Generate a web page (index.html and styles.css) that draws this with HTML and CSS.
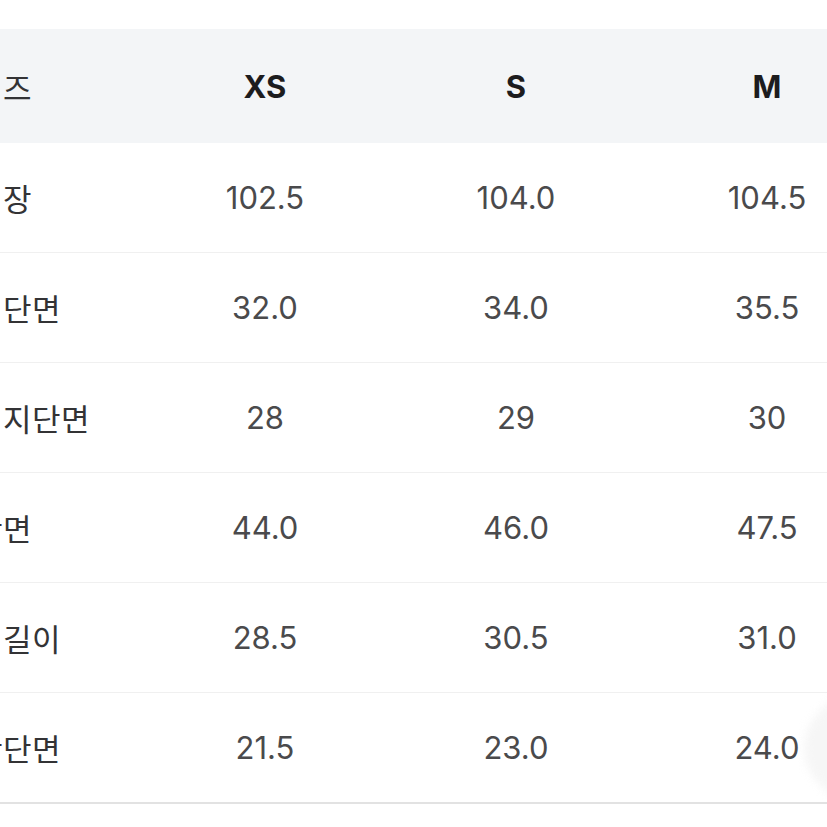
FILE: index.html
```html
<!DOCTYPE html>
<html lang="ko">
<head>
<meta charset="utf-8">
<title>사이즈표</title>
<link rel="stylesheet" href="styles.css">
</head>
<body>
<div class="page">
  <table class="size-table">
    <colgroup>
      <col class="col-label">
      <col class="col-size">
      <col class="col-size">
      <col class="col-size">
    </colgroup>
    <thead>
      <tr>
        <th class="label">사이즈</th>
        <th>XS</th>
        <th>S</th>
        <th>M</th>
      </tr>
    </thead>
    <tbody>
      <tr><td class="label">총기장</td><td>102.5</td><td>104.0</td><td>104.5</td></tr>
      <tr><td class="label">허리단면</td><td>32.0</td><td>34.0</td><td>35.5</td></tr>
      <tr><td class="label">허벅지단면</td><td>28</td><td>29</td><td>30</td></tr>
      <tr><td class="label">힙단면</td><td>44.0</td><td>46.0</td><td>47.5</td></tr>
      <tr><td class="label">밑위길이</td><td>28.5</td><td>30.5</td><td>31.0</td></tr>
      <tr class="last"><td class="label">밑단단면</td><td>21.5</td><td>23.0</td><td>24.0</td></tr>
    </tbody>
  </table>
  <div class="fab"></div>
</div>
</body>
</html>
```

FILE: styles.css
```css
html, body {
  margin: 0;
  padding: 0;
  overflow: hidden;
  background: #ffffff;
}

.page {
  position: relative;
  width: 827px;
  height: 827px;
  padding-top: 29px;
  box-sizing: border-box;
  font-family: "Inter", "Noto Sans CJK KR", sans-serif;
}

.size-table {
  margin-left: -55px;
  border-collapse: collapse;
  table-layout: fixed;
  width: 947.5px;
}

.col-label { width: 194.5px; }
.col-size { width: 251px; }

.size-table th,
.size-table td {
  padding: 0;
  text-align: center;
  vertical-align: middle;
}

.size-table th {
  height: 114px;
  background: #f3f5f7;
  font-size: 31px;
  font-weight: 700;
  color: #1c1c1e;
}

.size-table td {
  height: 109px;
  font-size: 31px;
  font-weight: 400;
  color: #4a4a4c;
  border-bottom: 1.5px solid #f0f0f0;
}

.size-table tr.last td {
  border-bottom: 2px solid #e2e2e2;
}

.size-table .label {
  text-align: left;
  font-weight: 400;
  color: #333335;
  letter-spacing: 0.5px;
}

.fab {
  position: absolute;
  left: 804px;
  top: 688px;
  width: 150px;
  height: 120px;
  border-radius: 50%;
  background: #f4f4f4;
  filter: blur(4px);
  opacity: 0.8;
}
```
